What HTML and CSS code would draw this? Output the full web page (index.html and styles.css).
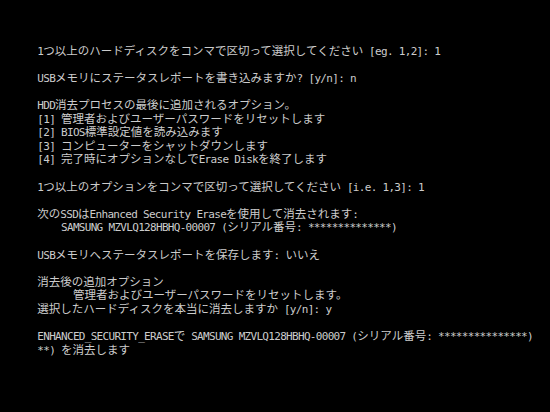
FILE: index.html
```html
<!DOCTYPE html>
<html lang="ja">
<head>
<meta charset="utf-8">
<title>Console</title>
<link rel="stylesheet" href="styles.css">
</head>
<body>
<div class="screen">
  <div class="console">
    <div class="line"><span class="a">1</span>つ以上のハードディスクをコンマで区切って選択してください<span class="a"> [eg. 1,2]: 1</span></div>
    <div class="line"></div>
    <div class="line"><span class="a">USB</span>メモリにステータスレポートを書き込みますか<span class="a">? [y/n]: n</span></div>
    <div class="line"></div>
    <div class="line"><span class="a">HDD</span>消去プロセスの最後に追加されるオプション。</div>
    <div class="line"><span class="a">[1] </span>管理者およびユーザーパスワードをリセットします</div>
    <div class="line"><span class="a">[2] BIOS</span>標準設定値を読み込みます</div>
    <div class="line"><span class="a">[3] </span>コンピューターをシャットダウンします</div>
    <div class="line"><span class="a">[4] </span>完了時にオプションなしで<span class="a">Erase Disk</span>を終了します</div>
    <div class="line"></div>
    <div class="line"><span class="a">1</span>つ以上のオプションをコンマで区切って選択してください<span class="a"> [i.e. 1,3]: 1</span></div>
    <div class="line"></div>
    <div class="line">次の<span class="a">SSD</span>は<span class="a">Enhanced Security Erase</span>を使用して消去されます<span class="a">:</span></div>
    <div class="line"><span class="a">    SAMSUNG MZVLQ128HBHQ-00007 (</span>シリアル番号<span class="a">: **************)</span></div>
    <div class="line"></div>
    <div class="line"><span class="a">USB</span>メモリへステータスレポートを保存します<span class="a">: </span>いいえ</div>
    <div class="line"></div>
    <div class="line">消去後の追加オプション</div>
    <div class="line"><span class="a">      </span>管理者およびユーザーパスワードをリセットします。</div>
    <div class="line">選択したハードディスクを本当に消去しますか<span class="a"> [y/n]: y</span></div>
    <div class="line"></div>
    <div class="line"><span class="a">ENHANCED_SECURITY_ERASE</span>で<span class="a"> SAMSUNG MZVLQ128HBHQ-00007 (</span>シリアル番号<span class="a">: ***************)</span></div>
    <div class="line"><span class="a">**) </span>を消去します</div>
  </div>
</div>
</body>
</html>
```

FILE: styles.css
```css
html, body {
  margin: 0;
  padding: 0;
  background: #000;
}

.screen {
  width: 550px;
  height: 412px;
  background: #000;
  overflow: hidden;
}

.console {
  padding: 43.7px 0 0 37.3px;
  color: #cccccc;
  font-family: "Noto Sans CJK JP", sans-serif;
  font-size: 11.5px;
}

.line {
  height: 13.6px;
  line-height: 13.6px;
  white-space: pre;
}

.a {
  font-family: "DejaVu Sans Mono", monospace;
  font-size: 11px;
  letter-spacing: -0.69px;
}
```
